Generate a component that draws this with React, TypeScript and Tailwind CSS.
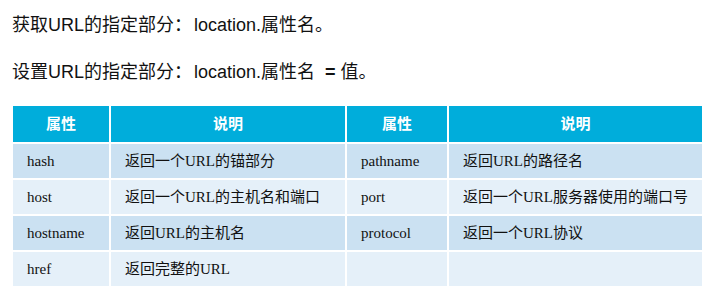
const rows = [
  ['hash', '返回一个URL的锚部分', 'pathname', '返回URL的路径名'],
  ['host', '返回一个URL的主机名和端口', 'port', '返回一个URL服务器使用的端口号'],
  ['hostname', '返回URL的主机名', 'protocol', '返回一个URL协议'],
  ['href', '返回完整的URL', '', ''],
];

const sans = "font-['Liberation_Sans','Noto_Sans_CJK_SC',sans-serif]";
const serif = "font-['Liberation_Serif','Noto_Sans_CJK_SC',serif]";

export default function App() {
  return (
    <div className={`h-[298px] w-[717px] bg-white text-[#111] ${sans}`}>
      {/* Intro lines */}
      <div className="flex flex-col gap-[23px] pl-[12px] pt-[13px] text-[18px] leading-[24px]">
        <p>
          获取URL的指定部分<span className="mr-[2px]">：</span>location.属性名。
        </p>
        <p>
          设置URL的指定部分<span className="mr-[2px]">：</span>location.属性名&nbsp;&nbsp;
          <span className="font-bold">=</span> 值。
        </p>
      </div>

      {/* Property table */}
      <div className="ml-[13px] mt-[22px] grid w-[689px] grid-cols-[96px_234px_100px_253px] gap-[2px] bg-white">
        {['属性', '说明', '属性', '说明'].map((h, i) => (
          <div
            key={i}
            className="flex h-[36px] items-center justify-center bg-[#00addb] text-[15px] font-bold text-white"
          >
            {h}
          </div>
        ))}
        {rows.map((r, ri) =>
          r.map((cell, ci) => (
            <div
              key={`${ri}-${ci}`}
              className={`flex h-[34px] items-center pl-[14px] text-[15px] ${serif} ${
                ri % 2 === 0 ? 'bg-[#cbe1f2]' : 'bg-[#e5f0f9]'
              }`}
            >
              {cell}
            </div>
          ))
        )}
      </div>
    </div>
  );
}
